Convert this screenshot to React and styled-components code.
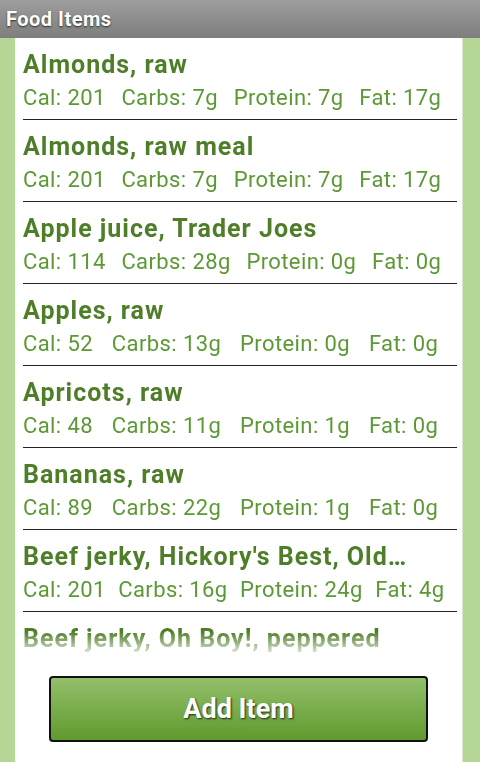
import React from 'react';
import styled, { createGlobalStyle } from 'styled-components';

const foods = [
  { name: 'Almonds, raw', cal: 201, carbs: 7, protein: 7, fat: 17 },
  { name: 'Almonds, raw meal', cal: 201, carbs: 7, protein: 7, fat: 17 },
  { name: 'Apple juice, Trader Joes', cal: 114, carbs: 28, protein: 0, fat: 0 },
  { name: 'Apples, raw', cal: 52, carbs: 13, protein: 0, fat: 0 },
  { name: 'Apricots, raw', cal: 48, carbs: 11, protein: 1, fat: 0 },
  { name: 'Bananas, raw', cal: 89, carbs: 22, protein: 1, fat: 0 },
  { name: "Beef jerky, Hickory's Best, Old Fashioned", cal: 201, carbs: 16, protein: 24, fat: 4 },
  { name: 'Beef jerky, Oh Boy!, peppered', cal: 240, carbs: 12, protein: 30, fat: 6 },
];

const App = () => {
  return (
    <>
      <GlobalStyle />
      <Screen>
        <TitleBar>Food Items</TitleBar>
        <Body>
          <Panel>
            <List>
              {foods.map((f) => (
                <Row key={f.name}>
                  <FoodName>{f.name}</FoodName>
                  <Stats>
                    <Stat>Cal: {f.cal}</Stat>
                    <Stat>Carbs: {f.carbs}g</Stat>
                    <Stat>Protein: {f.protein}g</Stat>
                    <Stat>Fat: {f.fat}g</Stat>
                  </Stats>
                </Row>
              ))}
            </List>
            <Footer>
              <AddButton>Add Item</AddButton>
            </Footer>
          </Panel>
        </Body>
      </Screen>
    </>
  );
};

export default App;

const GlobalStyle = createGlobalStyle`
  body {
    margin: 0;
    font-family: Roboto, "Liberation Sans", sans-serif;
  }
`;

const Screen = styled.div`
  width: 480px;
  height: 762px;
  display: flex;
  flex-direction: column;
  overflow: hidden;
`;

const TitleBar = styled.div`
  height: 38px;
  flex: none;
  box-sizing: border-box;
  padding: 0 6px;
  display: flex;
  align-items: center;
  background: linear-gradient(#9d9d9d, #7e7e7e);
  color: #fff;
  font-size: 20px;
  font-weight: bold;
  letter-spacing: 0.5px;
  text-shadow: 0 1px 2px rgba(0, 0, 0, 0.7);
`;

const Body = styled.div`
  flex: 1;
  display: flex;
  background: #b5d796;
  padding: 0 17px 0 15px;
  min-height: 0;
`;

const Panel = styled.div`
  flex: 1;
  display: flex;
  flex-direction: column;
  background: #fff;
  border-right: 1px solid #d9ead0;
  min-width: 0;
`;

/* list fades out at its bottom edge, like the Android fading edge */
const List = styled.div`
  height: 620px;
  flex: none;
  overflow: hidden;
  padding: 0 5px 0 8px;
  -webkit-mask-image: linear-gradient(to bottom, #000 calc(100% - 26px), transparent);
  mask-image: linear-gradient(to bottom, #000 calc(100% - 26px), transparent);
`;

const Row = styled.div`
  padding: 12px 0 7px;
  border-bottom: 1px solid #222;
`;

const FoodName = styled.div`
  font-size: 25px;
  line-height: 30px;
  font-weight: bold;
  letter-spacing: 1px;
  color: #4e7f28;
  white-space: nowrap;
  overflow: hidden;
  text-overflow: ellipsis;
  padding-right: 50px;
`;

const Stats = styled.div`
  display: flex;
  margin-top: 4px;
  font-size: 22px;
  line-height: 28px;
  letter-spacing: 0.4px;
  color: #5c9934;
  white-space: nowrap;
`;

const Stat = styled.span`
  flex: 1 1 auto;
`;

const Footer = styled.div`
  flex: 1;
  display: flex;
  justify-content: center;
  align-items: flex-start;
  padding-top: 18px;
`;

const AddButton = styled.button`
  width: 379px;
  height: 66px;
  box-sizing: border-box;
  border: 2px solid #111;
  border-radius: 4px;
  background: linear-gradient(#93c06b, #609a2d);
  color: #fff;
  font-family: Roboto, "Liberation Sans", sans-serif;
  font-size: 27px;
  font-weight: bold;
  text-shadow: 1px 1px 2px #1c2a10;
  cursor: pointer;
`;
